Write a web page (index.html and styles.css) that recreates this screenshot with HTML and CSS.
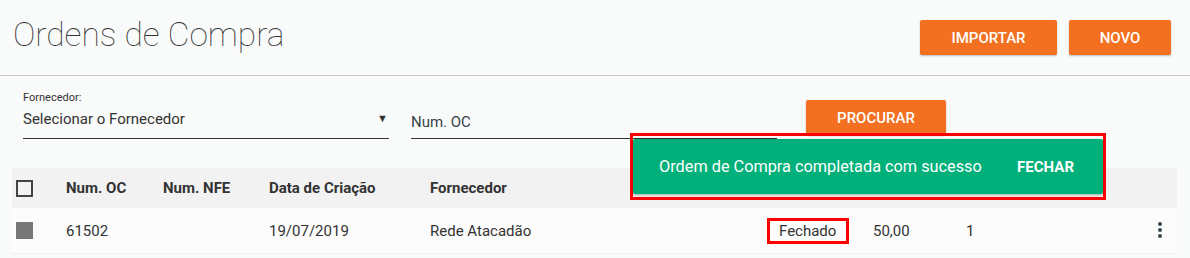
FILE: index.html
```html
<!DOCTYPE html>
<html lang="pt">
<head>
<meta charset="utf-8">
<title>Ordens de Compra</title>
<link rel="stylesheet" href="styles.css">
</head>
<body>
<header class="topbar">
  <h1 class="title">Ordens de Compra</h1>
  <div class="actions">
    <button class="btn btn-import">IMPORTAR</button>
    <button class="btn btn-new">NOVO</button>
  </div>
</header>

<section class="filters">
  <div class="field field-select">
    <label class="field-label">Fornecedor:</label>
    <div class="select">
      <span class="select-text">Selecionar o Fornecedor</span>
      <span class="select-arrow">▼</span>
    </div>
  </div>
  <div class="field field-input">
    <span class="placeholder">Num. OC</span>
  </div>
  <button class="btn btn-search">PROCURAR</button>
</section>

<section class="table">
  <div class="trow thead">
    <div class="cell cell-check"><span class="checkbox"></span></div>
    <div class="cell">Num. OC</div>
    <div class="cell">Num. NFE</div>
    <div class="cell">Data de Criação</div>
    <div class="cell">Fornecedor</div>
    <div class="cell"></div>
    <div class="cell"></div>
    <div class="cell"></div>
    <div class="cell cell-last"></div>
  </div>
  <div class="trow tbody">
    <div class="cell cell-check"><span class="checkbox filled"></span></div>
    <div class="cell">61502</div>
    <div class="cell"></div>
    <div class="cell">19/07/2019</div>
    <div class="cell">Rede Atacadão</div>
    <div class="cell"><span class="status-mark">Fechado</span></div>
    <div class="cell">50,00</div>
    <div class="cell">1</div>
    <div class="cell cell-last"><span class="kebab"><i></i><i></i><i></i></span></div>
  </div>
</section>

<div class="snack-mark">
  <div class="snackbar">
    <span class="snack-text">Ordem de Compra completada com sucesso</span>
    <span class="snack-action">FECHAR</span>
  </div>
</div>
</body>
</html>
```

FILE: styles.css
```css
* { box-sizing: border-box; }

html, body {
  margin: 0;
  padding: 0;
}

body {
  background: #f9fafa;
  font-family: Roboto, "Liberation Sans", Arial, sans-serif;
  color: #333;
  width: 1190px;
  height: 258px;
  overflow: hidden;
  position: relative;
}

.topbar {
  height: 76px;
  border-bottom: 1px solid #c6c6c6;
  display: flex;
  justify-content: space-between;
  align-items: flex-start;
  padding: 20px 19px 0 13px;
}

.title {
  margin: -2px 0 0 0;
  font-size: 33.5px;
  line-height: 34px;
  font-weight: 100;
  color: #333;
}

.actions {
  display: flex;
  gap: 12px;
}

.btn {
  border: 0;
  border-radius: 2px;
  background: #f37021;
  color: #fff;
  font-family: Roboto, "Liberation Sans", Arial, sans-serif;
  font-size: 15px;
  font-weight: 500;
  height: 35px;
  padding: 0;
  box-shadow: 0 1px 2px rgba(0,0,0,0.25);
  cursor: pointer;
}

.btn-import { width: 137px; }
.btn-new { width: 102px; }
.btn-search { width: 140px; margin-left: 29px; margin-bottom: 4px; }

.filters {
  display: flex;
  align-items: flex-end;
  padding: 15px 0 0 23px;
}

.field {
  width: 366px;
  border-bottom: 1px solid #333;
}

.field-input {
  margin-left: 22px;
  height: 30px;
  padding-top: 3px;
}

.field-label {
  display: block;
  font-size: 11px;
  line-height: 13px;
  color: #333;
  margin-bottom: 5px;
}

.select {
  display: flex;
  justify-content: space-between;
  align-items: flex-start;
  height: 29px;
}

.select-text {
  font-size: 15px;
  line-height: 20px;
}

.select-arrow {
  font-size: 11px;
  line-height: 20px;
  margin-right: 1px;
  color: #333;
}

.placeholder {
  font-size: 15px;
  line-height: 20px;
  color: #37424a;
}

.table {
  margin-top: 29px;
  padding: 0 13px 0 12px;
}

.trow {
  display: grid;
  grid-template-columns: 54px 97px 106px 161px 337px 106px 93px 165px 46px;
  align-items: center;
  font-size: 15px;
}

.thead {
  height: 40px;
  background: #f2f2f2;
  font-weight: 700;
  color: #333;
}

.tbody {
  height: 46px;
  background: #fcfcfc;
  border-bottom: 1px solid #f0f0f0;
}

.cell-check {
  padding-left: 4px;
  display: flex;
  align-items: center;
}

.checkbox {
  display: block;
  width: 17px;
  height: 17px;
  border: 2px solid #444;
}

.checkbox.filled {
  background: #777;
  border-color: #777;
}

.status-mark {
  display: inline-block;
  border: 3px solid #f00;
  height: 26px;
  line-height: 20px;
  padding: 0 9px 0 9px;
  width: 82px;
  white-space: nowrap;
}

.cell-last {
  display: flex;
  padding-left: 27px;
}

.kebab {
  display: flex;
  flex-direction: column;
  gap: 2px;
  margin-top: -2px;
}

.kebab i {
  display: block;
  width: 4px;
  height: 4px;
  border-radius: 50%;
  background: #37474f;
}

.snack-mark {
  position: absolute;
  left: 630px;
  top: 133px;
  border: 3px solid #f00;
  padding: 3px 0;
}

.snackbar {
  width: 470px;
  height: 55px;
  background: #00b07a;
  color: #fff;
  display: flex;
  align-items: center;
  justify-content: space-between;
  padding: 0 29px 0 26px;
  box-shadow: 0 1px 3px rgba(0,0,0,0.3);
  border-radius: 2px;
}

.snack-text {
  font-size: 16.3px;
}

.snack-action {
  font-size: 15px;
  font-weight: 700;
}
```
